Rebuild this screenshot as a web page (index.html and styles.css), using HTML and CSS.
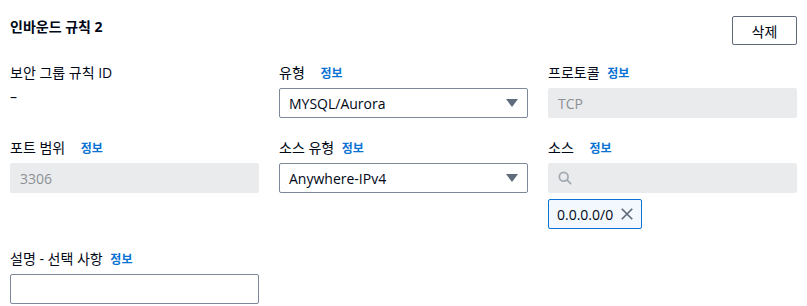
FILE: index.html
```html
<!DOCTYPE html>
<html lang="ko">
<head>
    <meta charset="UTF-8">
    <meta name="viewport" content="width=device-width, initial-scale=1.0">
    <title>인바운드 규칙</title>
    <link rel="stylesheet" href="styles.css">
</head>
<body>
    <div class="rule">
        <div class="rule-header">
            <h2>인바운드 규칙 2</h2>
            <button class="btn-delete">삭제</button>
        </div>

        <div class="rule-grid">
            <div class="field">
                <div class="label">보안 그룹 규칙 ID</div>
                <div class="value">–</div>
            </div>
            <div class="field">
                <div class="label">유형 <a class="info wide">정보</a></div>
                <div class="select">
                    <span>MYSQL/Aurora</span>
                    <span class="caret"></span>
                </div>
            </div>
            <div class="field">
                <div class="label">프로토콜 <a class="info">정보</a></div>
                <div class="input disabled">TCP</div>
            </div>

            <div class="field">
                <div class="label">포트 범위 <a class="info wide">정보</a></div>
                <div class="input disabled">3306</div>
            </div>
            <div class="field">
                <div class="label">소스 유형 <a class="info">정보</a></div>
                <div class="select">
                    <span>Anywhere-IPv4</span>
                    <span class="caret"></span>
                </div>
            </div>
            <div class="field">
                <div class="label">소스 <a class="info wide">정보</a></div>
                <div class="input disabled search">
                    <svg width="14" height="14" viewBox="0 0 16 16">
                        <circle cx="6.5" cy="6.5" r="5" fill="none" stroke="#a4aab2" stroke-width="2"/>
                        <line x1="10.2" y1="10.2" x2="14.5" y2="14.5" stroke="#a4aab2" stroke-width="2" stroke-linecap="round"/>
                    </svg>
                </div>
                <div class="token">
                    <span>0.0.0.0/0</span>
                    <svg width="14" height="14" viewBox="0 0 16 16">
                        <path d="M2 2 L14 14 M14 2 L2 14" stroke="#5f6b7a" stroke-width="2" fill="none"/>
                    </svg>
                </div>
            </div>

            <div class="field">
                <div class="label">설명 - 선택 사항 <a class="info">정보</a></div>
                <div class="input"></div>
            </div>
        </div>
    </div>
</body>
</html>
```

FILE: styles.css
```css
body {
    font-family: 'Open Sans', 'Noto Sans CJK KR', sans-serif;
    font-size: 14px;
    margin: 0;
    padding: 0;
    background-color: #ffffff;
    color: #000716;
}
.rule {
    padding: 16px 10px 0 10px;
}
.rule-header {
    display: flex;
    justify-content: space-between;
    align-items: flex-start;
    margin-bottom: 18px;
}
.rule-header h2 {
    margin: 0;
    font-size: 14px;
    font-weight: bold;
    line-height: 22px;
}
.btn-delete {
    width: 65px;
    height: 29px;
    background-color: #ffffff;
    border: 1px solid #5f6b7a;
    border-radius: 2px;
    font-family: inherit;
    font-size: 14px;
    color: #000716;
    padding: 0;
}
.rule-grid {
    display: grid;
    grid-template-columns: repeat(3, 1fr);
    column-gap: 20px;
    row-gap: 20px;
}
.label {
    line-height: 20px;
    margin-bottom: 4px;
    white-space: nowrap;
}
.info {
    color: #0972d3;
    font-size: 12px;
    font-weight: bold;
    margin-left: 4px;
}
.info.wide {
    margin-left: 12px;
}
.value {
    line-height: 20px;
}
.select, .input {
    box-sizing: border-box;
    height: 30px;
    border: 1px solid #7d8998;
    border-radius: 2px;
    display: flex;
    align-items: center;
    justify-content: space-between;
    padding: 0 9px 0 9px;
}
.caret {
    width: 0;
    height: 0;
    border-left: 6px solid transparent;
    border-right: 6px solid transparent;
    border-top: 8px solid #5f6b7a;
}
.input.disabled {
    background-color: #e9ebed;
    border-color: #e9ebed;
    color: #8d9096;
}
.search {
    justify-content: flex-start;
}
.token {
    box-sizing: border-box;
    display: inline-flex;
    align-items: center;
    gap: 7px;
    height: 30px;
    margin-top: 6px;
    padding: 0 7px 0 8px;
    border: 1px solid #0972d3;
    border-radius: 2px;
    background-color: #f2f8fd;
}
```
